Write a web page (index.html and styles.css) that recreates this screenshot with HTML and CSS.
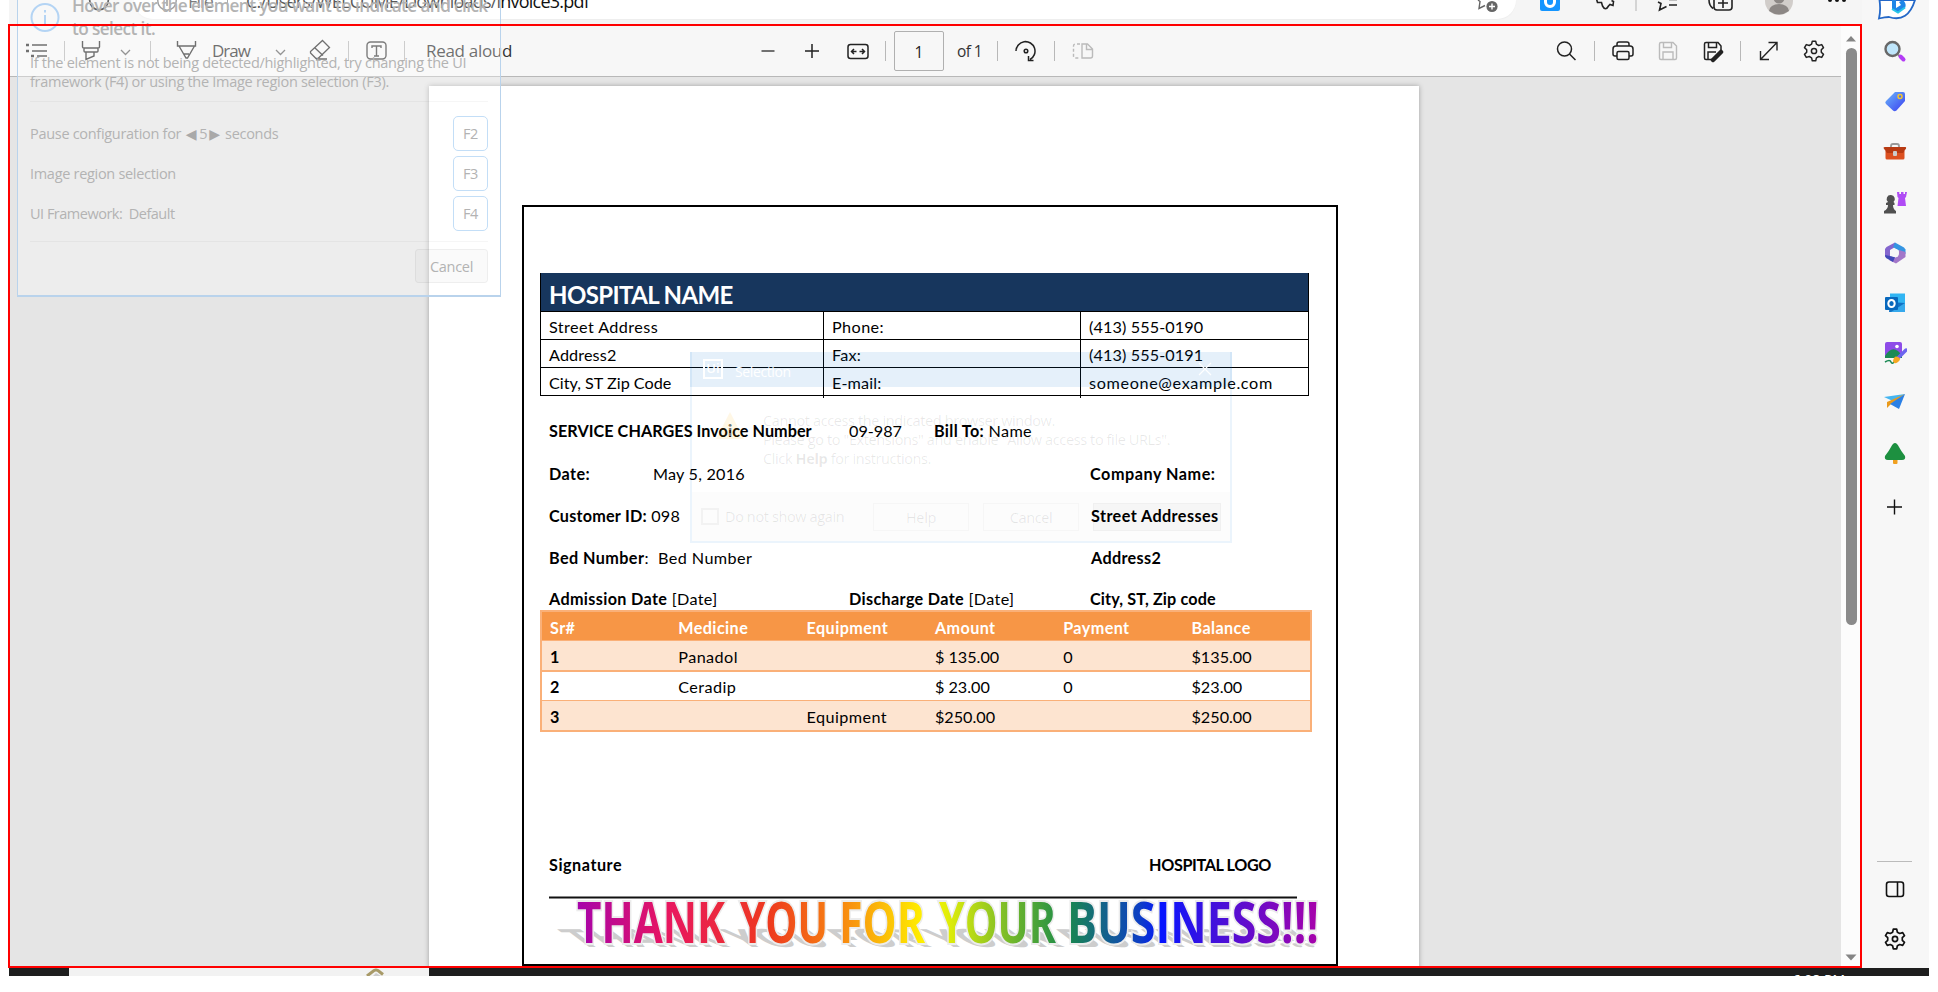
FILE: index.html
```html
<!DOCTYPE html>
<html lang="en">
<head>
<meta charset="utf-8">
<title>invoice3.pdf</title>
<link rel="stylesheet" href="styles.css">
</head>
<body>
<div class="screen">
  <div class="window">
    <div class="main">
      <div class="chrome">
        <svg class="reload" width="22" height="24" viewBox="0 0 22 24"><circle cx="11" cy="0.5" r="9.3" fill="none" stroke="#222" stroke-width="1.7"/></svg>
        <div class="address">
          <svg width="20" height="12" viewBox="0 0 20 12"><circle cx="10" cy="1" r="9.2" fill="none" stroke="#777" stroke-width="1.4"/><path d="M10 0v6" stroke="#777" stroke-width="1.6"/></svg>
          <span class="scheme">File</span><i class="bar"></i><span class="url">C:/Users/WELCOME/Downloads/invoice3.pdf</span>
          <svg class="star" width="24" height="14" viewBox="0 0 24 14"><path d="M2 0l2 1.5-1 7 6-3" fill="none" stroke="#666" stroke-width="1.4"/><circle cx="16" cy="6.5" r="5.6" fill="#666"/><path d="M13 6.5h6M16 3.5v6" stroke="#fff" stroke-width="1.4"/></svg>
        </div>
        <svg class="extras" width="330" height="25" viewBox="1530 0 330 25" fill="none" stroke="#222" stroke-width="1.6">
          <rect x="1540" y="-8" width="20" height="19" rx="2" fill="#1495ff" stroke="none"/><path d="M1545.500 -2v4a4.500 4.500 0 0 0 9 0v-4" stroke="#fff" stroke-width="3"/>
          <path d="M1596.500 -1l1 3.500h4l1 3.500q3 5.500 6 0l1.500-1.500 3 1 .5-4-2-1"/>
          <path d="M1636 0v11" stroke="#ccc"/>
          <path d="M1658 2l3 1.500-1.500 6.500 7-3.500M1669 5h8M1669 -1h8M1669 -.5h8"/>
          <path d="M1713 8.500q-4-3-4-8.500M1714 -2v9q0 3 3 3h12q3 0 3-3v-9M1718 3h10M1723 -2v10"/>
          <circle cx="1779" cy="1" r="14" fill="#d1cdca" stroke="none"/><circle cx="1779" cy="-2" r="5.500" fill="#8c8785" stroke="none"/><path d="M1769 11a10 7 0 0 1 20 0q-10 7-20 0z" fill="#8c8785" stroke="none"/>
          <g fill="#111" stroke="none"><circle cx="1830" cy="0" r="2"/><circle cx="1837" cy="0" r="2"/><circle cx="1844" cy="0" r="2"/></g>
        </svg>
      </div>
      <div class="viewer">
        <div class="left">
          <div class="toolbar">
            <div class="tools tools-left">
              <svg class="i-list" width="54" height="24" viewBox="0 0 54 24" fill="none" stroke="#333" stroke-width="1.3"><path d="M22 6h15M22 12h15M27 17h10"/><path d="M16 6h3M16 12h3M21 17h3" stroke-width="2.4"/></svg>
              <i class="sep"></i>
              <svg class="i-mark" width="52" height="24" viewBox="0 0 52 24" fill="none" stroke="#333" stroke-width="1.4"><path d="M17.500 2v6q0 1 1.500 1h14q1.500 0 1.500-1V2M19 9v3q0 1 1 1h12q1 0 1-1V9M21 13v7.500l8-3.500v-4"/></svg>
              <svg width="17" height="24" viewBox="0 0 17 24" fill="none" stroke="#666" stroke-width="1.3"><path d="M4 11l4.500 4.500 4.500-4.500"/></svg>
              <i class="sep g16"></i>
              <svg class="g24" width="24" height="24" viewBox="0 0 24 24" fill="none" stroke="#333" stroke-width="1.4"><path d="M2.500 2v5h18V2M4 7l7 12h1.500l7-12M9 15h5"/></svg>
              <span class="label draw g13">Draw</span>
              <svg class="g21" width="16" height="24" viewBox="0 0 16 24" fill="none" stroke="#666" stroke-width="1.3"><path d="M4 11l4.500 4.500 4.500-4.500"/></svg>
              <svg class="g20" width="24" height="24" viewBox="0 0 24 24" fill="none" stroke="#333" stroke-width="1.3"><path d="M14.500 1.500l7 7L10 19.500 H8L2.500 14v-1.500zM7 9l8 7.500M8 20h11"/></svg>
              <i class="sep g16"></i>
              <svg class="g16" width="24" height="24" viewBox="0 0 24 24" fill="none" stroke="#444" stroke-width="1.4"><rect x="2" y="3" width="19" height="17" rx="3.500"/><path d="M7 9V7h9v2M11.500 7v10M9 17h5"/></svg>
              <i class="sep g15"></i>
              <span class="label read g21">Read aloud</span>
            </div>
            <div class="tools tools-mid">
              <svg width="24" height="24" viewBox="0 0 24 24" stroke="#444" stroke-width="1.5"><path d="M5.500 12h13"/></svg>
              <svg class="g20" width="24" height="24" viewBox="0 0 24 24" stroke="#222" stroke-width="1.5"><path d="M5 12h14M12 5v14"/></svg>
              <svg class="g22" width="24" height="24" viewBox="0 0 24 24" fill="none" stroke="#222" stroke-width="1.5"><rect x="2" y="5.500" width="20" height="14" rx="2.500"/><path d="M5.500 12.500h5M8 10l-2.500 2.500 2.500 2.500M18.500 12.500h-5M16 10l2.500 2.500-2.500 2.500"/></svg>
              <i class="sep g15"></i>
              <span class="pagebox">1</span>
              <span class="label of g13">of 1</span>
              <i class="sep g16"></i>
              <svg class="g16" width="24" height="24" viewBox="0 0 24 24" fill="none" stroke="#222" stroke-width="1.5"><path d="M2 12a9.500 9.500 0 1 1 14 8.500M14.500 17v4.500h5"/><circle cx="12" cy="12" r="1.800"/></svg>
              <i class="sep g16"></i>
              <svg class="g16" width="24" height="24" viewBox="0 0 24 24" fill="none" stroke="#bbb" stroke-width="1.4"><path d="M9 5H4.500Q2.500 5 2.500 7v10q0 2 2 2H9" stroke-dasharray="3 2"/><path d="M11 5h5.500l5 5v7q0 2-2 2H11zM15.500 5v5.500h6"/></svg>
            </div>
            <div class="tools tools-right">
              <svg width="24" height="24" viewBox="0 0 24 24" fill="none" stroke="#222" stroke-width="1.5"><circle cx="10.500" cy="10" r="7"/><path d="M15.500 15l6 6"/></svg>
              <i class="sep g16"></i>
              <svg class="g16" width="24" height="24" viewBox="0 0 24 24" fill="none" stroke="#222" stroke-width="1.5"><path d="M6 7V5q0-2 2-2h8q2 0 2 2v2M6 17H4q-2 0-2-2v-5q0-3 3-3h14q3 0 3 3v5q0 2-2 2h-2"/><rect x="6" y="12.500" width="12" height="8" rx="1.500"/></svg>
              <svg class="g21" width="24" height="24" viewBox="0 0 24 24" fill="none" stroke="#bbb" stroke-width="1.4"><path d="M5 3.500h12l3.500 3.500v12q0 1.500-1.500 1.500H5q-1.500 0-1.500-1.500V5q0-1.500 1.500-1.500zM7.500 3.500v5h8v-5M7 20.500v-7.500h10v7.500"/></svg>
              <svg class="g21" width="24" height="24" viewBox="0 0 24 24" fill="none" stroke="#222" stroke-width="1.5"><path d="M11 20.500H5q-1.500 0-1.500-1.500V5q0-1.500 1.500-1.500h12l3 3.500v4M7.500 3.500v5h8v-5M7 20.500v-7.500h8"/><path d="M12 21l8-8" stroke-width="4.500" stroke-linecap="round"/></svg>
              <i class="sep g15"></i>
              <svg class="g16" width="24" height="24" viewBox="0 0 24 24" fill="none" stroke="#222" stroke-width="1.4"><path d="M3.500 20.500l16.500-17M11.500 3.500h8.500v8M3.500 12v8.500H12"/></svg>
              <svg class="g21" width="24" height="24" viewBox="0 0 24 24" fill="none" stroke="#222" stroke-width="1.5"><use href="#gear"/></svg>
            </div>
          </div>
          <div class="canvas">
            <div class="page">
              <div class="frame">
                <div class="hosp">
                  <div class="hosp-head"><span class="t-hosp">HOSPITAL NAME</span></div>
                  <div class="hosp-row"><span class="w4">Street Address</span><span class="w4">Phone:</span><span class="w1">(413) 555-0190</span></div>
                  <div class="hosp-row"><span class="w1">Address2</span><span class="w2">Fax:</span><span class="w1">(413) 555-0191</span></div>
                  <div class="hosp-row"><span>City, ST Zip Code</span><span class="w1">E-mail:</span><span class="w6">someone@example.com</span></div>
                </div>
                <div class="info info-bill"><b class="w0">SERVICE CHARGES Invoice Number</b><span>09-987</span><span class="w3"><b>Bill To:</b> Name</span></div>
                <div class="info info-date"><b class="w4">Date:</b><span class="w2">May 5, 2016</span><b class="w5">Company Name:</b></div>
                <div class="info info-cust"><span class="w2"><b>Customer ID:</b> 098</span><b class="w4">Street Addresses</b></div>
                <div class="info info-cust"><span class="w4"><b>Bed Number</b>:&nbsp; Bed Number</span><b class="w3">Address2</b></div>
                <div class="info info-adm"><span class="w3"><b>Admission Date</b> [Date]</span><span class="w3"><b>Discharge Date</b> [Date]</span><b class="w1">City, ST, Zip code</b></div>
                <div class="items">
                  <div class="irow ihead"><span>Sr#</span><span>Medicine</span><span>Equipment</span><span>Amount</span><span>Payment</span><span>Balance</span></div>
                  <div class="irow tint"><b>1</b><span class="w4">Panadol</span><span></span><span>$ 135.00</span><span>0</span><span>$135.00</span></div>
                  <div class="irow plain"><b>2</b><span class="w4">Ceradip</span><span></span><span>$ 23.00</span><span>0</span><span>$23.00</span></div>
                  <div class="irow tint"><b>3</b><span></span><span class="w4">Equipment</span><span>$250.00</span><span></span><span>$250.00</span></div>
                </div>
                <div class="sign"><b class="w5">Signature</b><b class="tight">HOSPITAL LOGO</b></div>
                <svg class="wordart" width="812" height="62" viewBox="524 894 812 62">
                  <defs><linearGradient id="rain" gradientUnits="userSpaceOnUse" x1="577" y1="0" x2="1317" y2="0">
                    <stop offset="0" stop-color="#a603ab"/><stop offset=".12" stop-color="#e81661"/><stop offset=".26" stop-color="#ee3a1e"/><stop offset=".36" stop-color="#f88a10"/><stop offset=".47" stop-color="#fff200"/><stop offset=".5" stop-color="#e2ee08"/><stop offset=".6" stop-color="#62b030"/><stop offset=".66" stop-color="#1a8a4a"/><stop offset=".76" stop-color="#0d3fc4"/><stop offset=".79" stop-color="#0614ff"/><stop offset=".85" stop-color="#3a12e0"/><stop offset="1" stop-color="#a603ab"/>
                  </linearGradient></defs>
                  <text transform="translate(580 947) skewX(53) scale(1 .44)" x="0" y="0" textLength="738" lengthAdjust="spacingAndGlyphs" class="wa wa-shadow" aria-hidden="true">THANK YOU FOR YOUR BUSINESS!!!</text>
                  <g class="wa wa-face">
                    <text x="577" y="942.500" textLength="148" lengthAdjust="spacingAndGlyphs">THANK</text>
                    <text x="740" y="942.500" textLength="88" lengthAdjust="spacingAndGlyphs">YOU</text>
                    <text x="839" y="942.500" textLength="86" lengthAdjust="spacingAndGlyphs">FOR</text>
                    <text x="939" y="942.500" textLength="117" lengthAdjust="spacingAndGlyphs">YOUR</text>
                    <text x="1067" y="942.500" textLength="214" lengthAdjust="spacingAndGlyphs">BUSINESS</text>
                    <text x="1281" y="942.500" textLength="38" lengthAdjust="spacingAndGlyphs">!!!</text>
                  </g>
                  <path d="M549 897.500h748" stroke="#111" stroke-width="1.800"/>
                </svg>
              </div>
            </div>
          </div>
        </div>
        <div class="scroll"><svg width="19" height="18" viewBox="0 0 19 18"><path d="M5 12.500l5-5.500 5 5.500z" fill="#858585"/></svg><div class="thumb"></div><svg width="19" height="18" viewBox="0 0 19 18"><path d="M4.500 8.500h11l-5.500 6z" fill="#858585"/></svg></div>
      </div>
    </div>
    <div class="side">
      <svg class="bing" width="44" height="24" viewBox="0 0 44 24"><path d="M3.500 0 Q5 10 3 18.500 Q9 17 13 17 Q32 23 39 0z" fill="#fff" stroke="#2468c8" stroke-width="1.800"/><path d="M16 0v9l6 3.500 7-4.500q2-4-2-8l-4 2 2 3-5 3V0z" fill="#1e86e8"/><path d="M16 9l6 3.500 7-5" stroke="#27c4e8" stroke-width="2" fill="none"/></svg>
      <svg class="si first" viewBox="0 0 24 24"><circle cx="9.500" cy="9" r="7" fill="#bfe6fb" stroke="#686868" stroke-width="2.400"/><path d="M15 14.500l2 2" stroke="#888" stroke-width="2"/><path d="M17.500 16.500l3 3" stroke="#b43cf5" stroke-width="4" stroke-linecap="round"/></svg>
      <svg class="si" viewBox="0 0 24 24"><defs><linearGradient id="tag" x1="0" y1="0" x2="1" y2="1"><stop stop-color="#6cb8fa"/><stop offset="1" stop-color="#3a3df0"/></linearGradient></defs><path d="M12 2h8q2 0 2 2v7L13.500 20.500q-2 1.500-3.500 0L3 14q-1.500-1.500 0-3z" fill="url(#tag)"/><circle cx="17" cy="6.500" r="2" fill="#4a6ff0" stroke="#f6c52c" stroke-width="1.500"/></svg>
      <svg class="si" viewBox="0 0 24 24"><path d="M8 8V6q0-2 2-2h4q2 0 2 2v2" fill="none" stroke="#999" stroke-width="1.800"/><path d="M2.500 11h19v7q0 1.500-1.500 1.500H4q-1.500 0-1.500-1.500z" fill="#dc5020"/><path d="M2 7h20.500q1 0 .5 1.500L20 13H4L.500 8q0-1 1.500-1z" fill="#b83a12"/><rect x="10" y="11" width="4" height="5" rx="1" fill="#ccc"/></svg>
      <svg class="si" viewBox="0 0 24 24"><path d="M14 1h2.300v2h1.700V1h2.500v2h1.500V1H24l-1 5-1 1 1 8h-8.500l1-8-1-1z" fill="#b04cf5"/><path d="M8 4a4 4 0 0 1 2.500 7L11.500 12v2h-1.500q0 4 3 6v2.500H1V20q4-2 4-6H3v-2l2-1A4 4 0 0 1 8 4z" fill="#505050"/></svg>
      <svg class="si" viewBox="0 0 24 24"><path d="M12 1.500L3.500 6 2 8v8l5 1.500V9l6-3.500z" fill="#8466ce"/><path d="M12 1.500l9 5 1.500 2V13l-6-3-6.500-4z" fill="#3595e2"/><path d="M22.500 11v5L13 22.500 6 19l9-3.500 1-6.500z" fill="#a377c9"/><path d="M2 14l10 2-2 5-7-4z" fill="#4149b8"/><circle cx="12" cy="12" r="4" fill="#f7f7f7"/></svg>
      <svg class="si" viewBox="0 0 24 24"><rect x="7" y="2.500" width="15" height="12" fill="#31b5f3"/><path d="M7 11l15 1v9H6z" fill="#1272c4"/><path d="M8 21l14-9v9z" fill="#36a9ec"/><rect x="2" y="6" width="13" height="13" rx="1" fill="#0868bd"/><ellipse cx="8.500" cy="12.500" rx="3.200" ry="3.600" fill="none" stroke="#fff" stroke-width="2"/></svg>
      <svg class="si" viewBox="0 0 24 24"><rect x="2" y="1" width="17" height="16" rx="2" fill="#8e4ce8"/><path d="M2 15q6-10 13-5l4 4v3H2z" fill="#1c8a55"/><circle cx="14" cy="5.500" r="1.800" fill="#fff"/><path d="M2 21q5-3 6 0t4-1" fill="none" stroke="#1c8a55" stroke-width="1.500"/><path d="M15 17l8-8" stroke="#6c64f0" stroke-width="3.400" stroke-linecap="round"/><path d="M10 20q1-6 5-4t0 5-5-1z" fill="#f5a821"/></svg>
      <svg class="si" viewBox="0 0 24 24"><path d="M1 6l21-3-10 8z" fill="#45b5f0"/><path d="M22 3L4 11v6l4-4z" fill="#e99a1c"/><path d="M22 3l-6 15-9-5z" fill="#2a80e6"/></svg>
      <svg class="si" viewBox="0 0 24 24"><rect x="10" y="16" width="4.500" height="6" rx="1" fill="#f0a020"/><path d="M12 1q2 0 4 4t6 9q1 4-3 4H5q-4 0-3-4 4-5 6-9t4-4z" fill="#1d9040"/></svg>
      <svg class="si plus" viewBox="0 0 24 24" stroke="#111" stroke-width="1.400"><path d="M4 12h15M11.500 4.500v15"/></svg>
      <div class="grow"></div>
      <i class="side-line"></i>
      <svg class="si pane" viewBox="0 0 24 24" fill="none" stroke="#111" stroke-width="1.600"><rect x="3.500" y="5" width="17" height="14.500" rx="2.500"/><path d="M14.500 5v14"/></svg>
      <svg class="si cog" viewBox="0 0 24 24" fill="none" stroke="#111" stroke-width="1.700"><g id="gear"><circle cx="12" cy="12" r="2.600"/><path d="M10.300 2.200h3.400l.7 3 2.300 1.300 3-.9 1.800 3-2.200 2.100v2.600l2.200 2.100-1.800 3-3-.9-2.300 1.300-.7 3h-3.400l-.7-3-2.300-1.300-3 .9-1.800-3 2.200-2.100v-2.600l-2.200-2.100 1.800-3 3 .9 2.300-1.300z" stroke-linejoin="round"/></g></svg>
    </div>
  </div>
  <div class="taskbar"><div class="searchbox"><svg width="22" height="8" viewBox="0 0 22 8"><path d="M2 8l7-5.500q2-1 4 0l5 4" fill="none" stroke="#a89a68" stroke-width="3"/><path d="M8 8l3-3 5 3z" fill="#ccc"/></svg></div><div class="clock">6:08 PM</div></div>

  <div class="hint">
    <div class="hint-top"><svg width="30" height="34" viewBox="0 0 30 34"><circle cx="15" cy="17.500" r="13.500" fill="none" stroke="#b4d4f4" stroke-width="2"/><path d="M15 15v10M15 10v2.500" stroke="#b4d4f4" stroke-width="2"/></svg>
      <div class="hint-title"><span>Hover over the element you want to indicate and click</span><br><span>to select it.</span></div></div>
    <div class="hint-text"><span class="l1">If the element is not being detected/highlighted, try changing the UI</span><br><span class="l2">framework (F4) or using the Image region selection (F3).</span></div>
    <div class="hint-rows">
      <div class="hint-row"><span>Pause configuration for <i class="tri">◀</i><span class="five">5</span><i class="tri">▶</i> seconds</span><kbd>F2</kbd></div>
      <div class="hint-row"><span>Image region selection</span><kbd>F3</kbd></div>
      <div class="hint-row"><span class="fw">UI Framework:&nbsp; Default</span><kbd>F4</kbd></div>
    </div>
    <div class="hint-foot"><span class="cancel">Cancel</span></div>
  </div>

  <div class="dialog">
    <div class="dlg-bar"><span class="uilogo">Ui</span><span class="dlg-name">Selection</span><svg width="14" height="14" viewBox="0 0 14 14" stroke="#fff" stroke-width="1.200"><path d="M1 1l12 12M13 1L1 13"/></svg></div>
    <div class="dlg-body"><svg width="30" height="30" viewBox="0 0 30 30"><path d="M15 1l14 27H1z" fill="#ffb000" fill-opacity=".1"/><path d="M15 10v9M15 22v3" stroke="#fff" stroke-opacity=".4" stroke-width="2.500"/></svg>
      <div class="dlg-text"><span>Cannot access the indicated browser window.</span><br><span>Please go to "Extensions" and enable "Allow access to file URLs".</span><br><span>Click <b>Help</b> for instructions.</span></div></div>
    <div class="dlg-foot"><i class="check"></i><span class="dns">Do not show again</span><span class="btn help">Help</span><span class="btn">Cancel</span><span class="btn any"></span></div>
  </div>
  <div class="highlight"></div>
</div>
</body>
</html>
```
FILE: styles.css
```css
* { box-sizing: border-box; }
body { margin: 0; background: #fff; font-family: "Open Sans", "Noto Sans", sans-serif; color: #222; }
svg { display: block; flex: none; }
i { font-style: normal; }
.screen { position: relative; width: 1921px; height: 976px; margin-left: 9px; margin-bottom: 16px; overflow: visible; }
.window { display: flex; width: 1920px; height: 968px; overflow: hidden; }
.main { width: 1853px; display: flex; flex-direction: column; }

/* browser chrome */
.chrome { height: 25px; display: flex; background: #f5f5f5; }
.reload { margin-left: 79px; }
.address { margin-left: 24px; width: 1382px; height: 19px; background: #fff; border-radius: 0 0 20px 20px; display: flex; align-items: flex-start; box-shadow: 0 1px 1px #eee; overflow: hidden; padding-left: 23px; font-size: 18px; line-height: 24px; }
.address span { margin-top: -11px; white-space: nowrap; }
.scheme { margin-left: 11px; width: 26px; color: #444; letter-spacing: -.9px; }
.bar { width: 1px; height: 11px; background: #888; margin-left: 13px; }
.url { margin-left: 18px; color: #111; letter-spacing: -.78px; }
.star { margin-left: auto; margin-right: 16px; }
.extras { margin-left: 14px; }

/* pdf viewer */
.viewer { display: flex; height: 943px; }
.left { width: 1832px; display: flex; flex-direction: column; }
.toolbar { height: 52px; background: #f7f7f7; border-bottom: 1px solid #b8b8b8; display: flex; align-items: center; padding-top: 1px; }
.tools { display: flex; align-items: center; height: 100%; }
.tools-left { padding-left: 1px; width: 747px; }
.tools-mid { width: 798px; }
.sep { width: 1px; height: 20px; background: #b8b8b8; flex: none; }
.g13 { margin-left: 13px; } .g15 { margin-left: 15px; } .g16 { margin-left: 16px; } .g20 { margin-left: 20px; }
.g21 { margin-left: 21px; } .g22 { margin-left: 22px; } .g24 { margin-left: 24px; }
.label { font-size: 17px; line-height: 24px; white-space: nowrap; color: #333; }
.draw { width: 39px; letter-spacing: -1px; }
.read { letter-spacing: -.3px; }
.of { width: 24px; font-size: 15.5px; letter-spacing: -.6px; }
.pagebox { margin-left: 8px; width: 50px; height: 40px; border: 1px solid #b0b0b0; border-radius: 2px; font-size: 15.5px; line-height: 40px; text-align: center; }
.canvas { flex: 1; background: #e5e5e5; padding: 9px 0 0 420px; overflow: hidden; }
.page { width: 990px; height: 900px; background: #fff; box-shadow: 0 0 5px rgba(0,0,0,.3); padding: 119px 0 0 93px; }
.frame { width: 816px; height: 761px; border: 2px solid #000; padding: 66px 0 0 16px; font: 16.2px/22px Lato, sans-serif; color: #000; white-space: nowrap; }
.w0 { letter-spacing: .05px; } .w1 { letter-spacing: .12px; } .w2 { letter-spacing: .22px; } .w3 { letter-spacing: .34px; }
.w4 { letter-spacing: .42px; } .w5 { letter-spacing: .53px; } .w6 { letter-spacing: .65px; }
.tight { letter-spacing: -.38px; }

.hosp { width: 769px; border: 1px solid #000; border-top: 0; }
.hosp-head { height: 39px; background: #17365d; color: #fff; font-weight: 700; font-size: 24px; line-height: 43px; padding-left: 8px; border-bottom: 1px solid #000; }
.t-hosp { letter-spacing: -.6px; }
.hosp-row { display: grid; grid-template-columns: 282px 257px 228px; height: 28px; border-bottom: 1px solid #000; line-height: 30px; }
.hosp-row:last-child { border-bottom: 0; height: 27px; }
.hosp-row span { padding-left: 8px; }
.hosp-row span + span { border-left: 1px solid #000; }

.info { display: grid; margin-left: 9px; height: 42px; line-height: 42px; }
.info-bill { margin-top: 14px; grid-template-columns: 300px 85px 1fr; }
.info-date { grid-template-columns: 104px 437px 1fr; height: 43px; line-height: 43px; }
.info-cust { grid-template-columns: 542px 1fr; }
.info-adm { grid-template-columns: 300px 241px 1fr; height: 31px; line-height: 22px; padding-top: 9px; }

.items { width: 772px; border: 2px solid #fab078; }
.irow { display: grid; grid-template-columns: repeat(6, 128.300px); padding-left: 8px; height: 30px; line-height: 31px; }
.ihead { background: #f79646; color: #fff; font-weight: 700; height: 28px; line-height: 31px; letter-spacing: .4px; }
.tint { background: #fde4d0; }
.plain { border-top: 2px solid #fab078; border-bottom: 1px solid #fab078; line-height: 29px; height: 31px; }
.ihead + .tint { border-top: 1px solid #fab078; line-height: 31px; }
.tint:last-child { height: 29px; line-height: 31px; }

.sign { display: flex; justify-content: space-between; width: 722px; margin: 122px 0 0 9px; height: 22px; }
.wordart { margin: 18px 0 0 -16px; }
.wa { font: 700 57px "Open Sans", sans-serif; }
.wa-face { fill: url(#rain); stroke: #ececec; stroke-width: 4px; paint-order: stroke; }
.wa-shadow { fill: #cdcdcd; }

.scroll { width: 21px; background: #fcfcfc; display: flex; flex-direction: column; padding-top: 4px; }
.thumb { width: 11px; height: 577px; border-radius: 6px; background: #8a8a8a; margin: 1px 0 321px 5px; }

/* edge sidebar */
.side { width: 67px; background: #f7f7f7; display: flex; flex-direction: column; align-items: center; padding-right: 2px; }
.bing { margin-left: 7px; }
.si { width: 24px; height: 24px; margin-bottom: 26.200px; }
.first { margin-top: 16px; }
.plus { margin-top: 3px; margin-bottom: 0; }
.grow { flex: 1; }
.side-line { width: 35px; height: 1px; background: #bbb; margin-bottom: 15px; }
.pane { margin-bottom: 26px; }
.cog { margin-bottom: 17px; }

.taskbar { width: 1920px; height: 8px; background: #1e1e1e; display: flex; justify-content: space-between; overflow: hidden; }
.searchbox { margin-left: 60px; width: 360px; background: #f2f2f2; padding-left: 296px; }
.clock { color: #fff; font-size: 14px; line-height: 20px; margin-right: 84px; margin-top: 2px; }

.highlight { position: absolute; left: -1px; top: 24px; width: 1854px; height: 944px; border: 2px solid #f00; }

/* fading selection hint */
.hint { position: absolute; left: 8px; top: 0; width: 484px; height: 297px; padding: 0 12px; background: rgba(255,255,255,.3); border: 1px solid #b9d3ec; border-top: 0; border-bottom-width: 2px; color: #b3b3b3; white-space: nowrap; }
.hint-top { display: flex; height: 55px; }
.hint-title { margin: -5px 0 0 12px; font: 600 17.2px/22.500px "Open Sans", sans-serif; letter-spacing: -.6px; }
.hint-text { font-size: 14.500px; line-height: 19.300px; height: 49px; border-bottom: 1px solid rgba(0,0,0,.035); letter-spacing: -.28px; margin-top: -2px; }
.hint-rows { padding-top: 14px; height: 140px; border-bottom: 1px solid rgba(0,0,0,.035); font-size: 14.500px; letter-spacing: -.3px; }
.hint-row { display: flex; justify-content: space-between; height: 39.800px; line-height: 36px; }
.fw { letter-spacing: -.5px; }
.tri { font-family: "DejaVu Sans"; font-size: 14px; color: #a9a9a9; margin: 0 2px 0 1px; }
.five { margin: 0 1px; }
kbd { width: 35px; height: 35px; border: 1px solid #c3def7; border-radius: 5px; text-align: center; font: 14.500px/34px "Open Sans", sans-serif; background: rgba(255,255,255,.35); }
.hint-foot { padding-top: 7px; display: flex; justify-content: flex-end; }
.cancel { width: 73px; height: 34px; border: 1px solid rgba(0,0,0,.05); border-radius: 4px; text-align: center; font-size: 14.500px; line-height: 33px; background: rgba(0,0,0,.02); letter-spacing: -.3px; }

/* fading dialog */
.dialog { position: absolute; left: 681px; top: 352px; width: 542px; height: 191px; border: 2px solid rgba(0,120,212,.08); border-top: 0; color: rgba(0,0,0,.09); font-size: 14.5px; letter-spacing: -.38px; white-space: nowrap; }
.dlg-bar { height: 35px; margin: 0 -2px; background: rgba(0,110,210,.1); display: flex; align-items: center; padding: 3px 20px 0 13px; color: #fff; }
.dlg-bar svg { margin-left: auto; margin-top: -4px; }
.uilogo { width: 20px; height: 20px; border: 2px solid #fff; font: 600 13px/15px "Open Sans", sans-serif; text-align: center; letter-spacing: 0; margin-top: -4px; }
.dlg-name { margin-left: 12px; font-size: 14px; }
.dlg-body { display: flex; height: 105px; }
.dlg-body svg { margin: 24px 0 0 23px; }
.dlg-text { margin: 24px 0 0 18px; line-height: 19.200px; }
.dlg-foot { height: 49px; background: rgba(0,0,0,.012); display: flex; align-items: center; padding-left: 9px; }
.check { width: 18px; height: 17px; border: 2px solid rgba(0,0,0,.04); }
.dns { margin-left: 6px; width: 119px; }
.btn { width: 96px; height: 28px; line-height: 28px; text-align: center; border: 1px solid rgba(0,0,0,.025); margin-left: 14px; }
.help { margin-left: 29px; }
.any { width: 128px; background: rgba(0,0,0,.025); }
```
